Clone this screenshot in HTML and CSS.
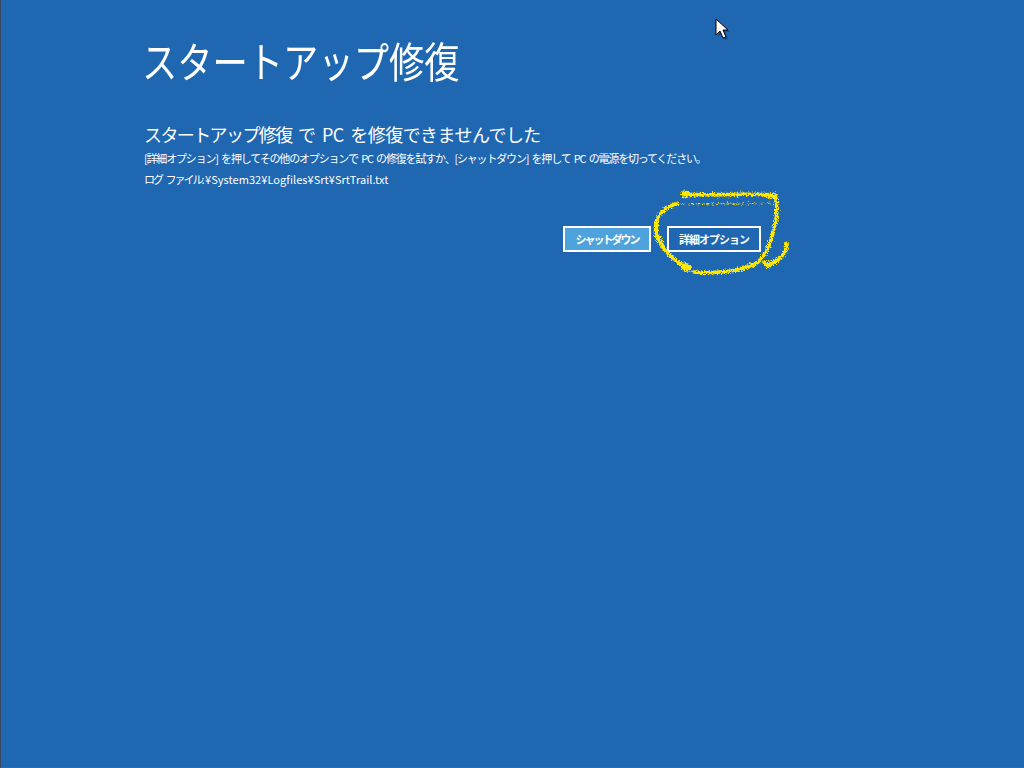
FILE: index.html
```html
<!DOCTYPE html>
<html lang="ja">
<head>
<meta charset="utf-8">
<title>スタートアップ修復</title>
<link rel="stylesheet" href="styles.css">
</head>
<body>
<main class="panel">
  <h1 class="title">スタートアップ修復</h1>
  <h2 class="subtitle"><span class="tight">スタートアップ修復</span> で PC を修復できませんでした</h2>
  <p class="info">[詳細オプション] を押してその他のオプションで PC の修復を試すか、[シャットダウン] を押して PC の電源を切ってください。</p>
  <p class="log"><span class="log-label">ログ ファイル:</span> ¥System32¥Logfiles¥Srt¥SrtTrail.txt</p>
  <div class="actions">
    <button class="btn btn-focus">シャットダウン</button>
    <button class="btn">詳細オプション</button>
  </div>
</main>
<svg class="scribble" width="145" height="95" viewBox="650 185 145 95">
  <defs>
    <filter id="rough" x="-10%" y="-10%" width="120%" height="120%">
      <feTurbulence type="fractalNoise" baseFrequency="0.7" numOctaves="2" seed="4" result="noise"/>
      <feDisplacementMap in="SourceGraphic" in2="noise" scale="6" xChannelSelector="R" yChannelSelector="G"/>
    </filter>
  </defs>
  <g filter="url(#rough)">
    <path class="ink-fine" d="M677 204C705 203 740 205 770 203"/>
    <path class="ink-dash" d="M683 194C710 196 745 193 775 195C778 205 777 220 773 232C770 245 767 253 757 263C745 270 720 274 693 272"/>
    <path class="ink-dash" d="M677 204C668 206 660 212 657 220C653 232 657 240 663 247C668 254 672 258 677 261"/>
    <path class="ink-dash" d="M787 243C786 252 782 258 776 261C772 264 768 266 764 262"/>
    <path class="ink-solid" d="M683 194L690 194M767 195L774 197M657 220L656 232L663 247M676 260L686 268M737 270L752 265M767 266L780 258"/>
    <path class="ink-thick" d="M684 266L688 268M685 194L686 194"/>
  </g>
</svg>
<svg class="cursor" width="16" height="24" viewBox="0 0 16 24">
  <path class="cursor-shadow" d="M3 3V19L7 15L10 22L13 21L10 14H15Z"/>
  <path class="cursor-arrow" d="M1 1V17L5 13L8 20L11 19L8 12H13Z"/>
</svg>
</body>
</html>
```
FILE: styles.css
```css
html, body {
  margin: 0;
  height: 100%;
}
body {
  position: relative;
  width: 1024px;
  height: 768px;
  overflow: hidden;
  background: #2067b2;
  box-shadow: inset 1px 0 #3a4a5c, inset 0 -1px #56606a;
  font-family: "Noto Sans CJK JP", "Noto Sans", sans-serif;
  color: #fff;
}
.panel {
  box-sizing: border-box;
  width: 761px;
  padding: 32px 0 0 144px;
}
.title {
  margin: 0 0 0 -2px;
  width: 380px;
  font-size: 42px;
  line-height: 56px;
  font-weight: 400;
  letter-spacing: 0;
  white-space: nowrap;
  transform: scaleX(0.84);
  transform-origin: left center;
}
.subtitle {
  margin: 33px 0 0;
  font-size: 18px;
  line-height: 26px;
  font-weight: 400;
  letter-spacing: -0.55px;
  word-spacing: 3px;
}
.tight {
  letter-spacing: -1.6px;
}
.info {
  margin: 3px 0 0;
  font-size: 11px;
  line-height: 16px;
  letter-spacing: -1.18px;
  word-spacing: 2px;
  white-space: nowrap;
}
.log {
  margin: 5px 0 0;
  font-size: 11px;
  line-height: 16px;
  letter-spacing: 0.05px;
}
.log-label {
  letter-spacing: -2px;
  word-spacing: 3px;
}
.actions {
  display: flex;
  justify-content: flex-end;
  gap: 16px;
  margin-top: 39px;
}
.btn {
  box-sizing: border-box;
  height: 26px;
  padding: 0;
  width: 94px;
  border: 2px solid #fff;
  background: #2067b2;
  color: #fff;
  font-family: inherit;
  font-size: 11px;
  font-weight: 700;
  line-height: 20px;
  letter-spacing: -1px;
}
.btn-focus {
  width: 88px;
  background: #4fa3dc;
  letter-spacing: -2px;
}
.scribble {
  position: absolute;
  left: 650px;
  top: 185px;
}
.scribble path {
  fill: none;
  stroke: #ffe800;
  stroke-linecap: round;
  stroke-linejoin: round;
}
.ink-fine {
  stroke-width: 1.3;
  stroke-dasharray: 2 3;
}
.ink-dash {
  stroke-width: 3.6;
  stroke-dasharray: 3 1.2;
}
.ink-solid {
  stroke-width: 4;
}
.ink-thick {
  stroke-width: 7;
}
.cursor {
  position: absolute;
  left: 715px;
  top: 18px;
}
.cursor-shadow {
  fill: #123f70;
  opacity: 0.6;
}
.cursor-arrow {
  fill: #fff;
  stroke: #000;
  stroke-width: 1;
}
```
